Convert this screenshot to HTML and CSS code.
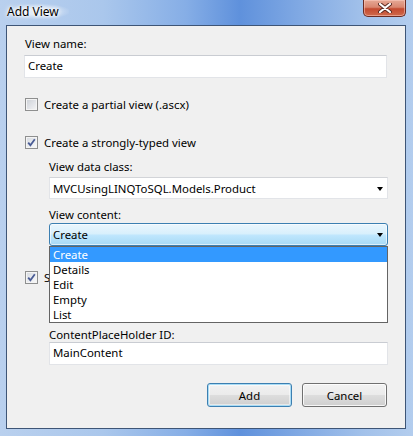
FILE: index.html
```html
<!DOCTYPE html>
<html>
<head>
<meta charset="utf-8">
<link rel="stylesheet" href="styles.css">
</head>
<body>
<div class="window">
  <div class="titlebar">
    <span class="title">Add View</span>
    <div class="close">
      <svg width="14" height="10" viewBox="0 0 14 10">
        <path d="M2 1 L12 9 M12 1 L2 9" stroke="#5a2a22" stroke-width="4" stroke-linecap="round"/>
        <path d="M2 1 L12 9 M12 1 L2 9" stroke="#ffffff" stroke-width="2.2" stroke-linecap="round"/>
      </svg>
    </div>
  </div>
  <div class="panel">
    <div class="label">View name:</div>
    <div class="textbox wide">Create</div>

    <div class="check-row first">
      <span class="checkbox"></span>
      <span>Create a partial view (.ascx)</span>
    </div>
    <div class="check-row second">
      <span class="checkbox checked">
        <svg width="9" height="9" viewBox="0 0 9 9"><path d="M1.2 4.6 L3.4 7.2 L7.8 1.2" fill="none" stroke="#4a5c95" stroke-width="1.8"/></svg>
      </span>
      <span>Create a strongly-typed view</span>
    </div>

    <div class="sub">
      <div class="label l-data">View data class:</div>
      <div class="select">
        <span>MVCUsingLINQToSQL.Models.Product</span>
        <span class="arrow"></span>
      </div>
      <div class="label l-content">View content:</div>
      <div class="combo-wrap">
        <div class="select focused">
          <span>Create</span>
          <span class="arrow"></span>
        </div>
        <ul class="dropdown">
          <li class="selected">Create</li>
          <li>Details</li>
          <li>Edit</li>
          <li>Empty</li>
          <li>List</li>
        </ul>
      </div>
    </div>

    <div class="check-row third">
      <span class="checkbox checked">
        <svg width="9" height="9" viewBox="0 0 9 9"><path d="M1.2 4.6 L3.4 7.2 L7.8 1.2" fill="none" stroke="#4a5c95" stroke-width="1.8"/></svg>
      </span>
      <span class="partial">S</span>
    </div>
    <div class="sub">
      <div class="label l-cph">ContentPlaceHolder ID:</div>
      <div class="textbox">MainContent</div>
    </div>

    <div class="buttons">
      <div class="btn default">Add</div>
      <div class="btn">Cancel</div>
    </div>
  </div>
</div>
</body>
</html>
```

FILE: styles.css
```css
* { box-sizing: border-box; }
html, body { margin: 0; padding: 0; }
body {
  font-family: "Noto Sans", "Open Sans", sans-serif;
  font-size: 11.4px;
  color: #000;
  background: #fff;
}
.window {
  width: 413px;
  height: 436px;
  background:
    linear-gradient(90deg, #b9d0ee 0%, #aac7ec 25%, #86aee6 45%, #5f91dc 58%, #7fa8e3 72%, #a2c1ea 88%, #b3cdee 100%);
  display: flex;
  flex-direction: column;
  overflow: hidden;
}
.titlebar {
  height: 25px;
  display: flex;
  justify-content: space-between;
  align-items: flex-start;
  padding-left: 7px;
  padding-right: 7px;
}
.title {
  margin-top: 4px;
  line-height: 15px;
  font-size: 12px;
  text-shadow: 0 0 6px #fff, 0 0 4px #fff, 0 0 2px #fff;
  background: radial-gradient(ellipse at center, rgba(255,255,255,0.55) 30%, rgba(255,255,255,0) 75%);
  padding: 0 10px 0 0;
}
.close {
  width: 43px;
  height: 17px;
  border: 1px solid #6a2b23;
  border-top: none;
  border-radius: 0 0 5px 5px;
  background: linear-gradient(180deg, #e6a996 0%, #d98670 45%, #c44a30 55%, #cf6a4c 100%);
  box-shadow: inset 0 0 0 1px rgba(255,210,200,0.5);
  display: flex;
  align-items: center;
  justify-content: center;
}
.panel {
  margin-left: 6px;
  width: 400px;
  height: 404px;
  border: 1px solid #3e5576;
  background: #f0f0f0;
  padding: 10px 17px 0 18px;
}
.label {
  line-height: 15px;
  height: 15px;
  white-space: nowrap;
}
.textbox {
  height: 23px;
  background: #fff;
  border: 1px solid #e2e4e8;
  border-top-color: #c9ccd2;
  padding-left: 3px;
  line-height: 20px;
  white-space: nowrap;
}
.textbox.wide {
  margin-top: 4px;
  margin-left: -1px;
  margin-right: 1px;
}
.check-row {
  display: flex;
  align-items: center;
  height: 15px;
  line-height: 15px;
  gap: 6px;
  white-space: nowrap;
}
.check-row.first { margin-top: 19px; }
.check-row.second { margin-top: 23px; }
.check-row.third { margin-top: 24px; }
.partial {
  width: 6px;
}
.checkbox {
  width: 13px;
  height: 13px;
  flex: none;
  border: 1px solid #8e8f8f;
  background: linear-gradient(135deg, #cbcfd5 0%, #e4e6ea 60%, #f6f6f6 100%);
  box-shadow: inset 0 0 0 1px #f4f4f4;
  display: flex;
  align-items: center;
  justify-content: center;
}
.checkbox.checked {
  background: linear-gradient(135deg, #d5d9df 0%, #eceef1 60%, #fafafa 100%);
}
.sub {
  margin-left: 24px;
}
.l-data { margin-top: 9px; }
.l-content { margin-top: 8px; }
.l-cph { margin-top: 42px; }
.select {
  margin-top: 3px;
  height: 22px;
  background: #fff;
  border: 1px solid #e2e4e8;
  border-top-color: #d2d4d8;
  display: flex;
  align-items: center;
  justify-content: space-between;
  padding: 0 4px 0 3px;
  white-space: nowrap;
}
.arrow {
  width: 0;
  height: 0;
  border-left: 3.5px solid transparent;
  border-right: 3.5px solid transparent;
  border-top: 4px solid #000;
  margin-top: 1px;
}
.combo-wrap {
  position: relative;
  margin-top: 1px;
}
.select.focused {
  margin-top: 0;
  height: 23px;
  border: 1px solid #3c7fb1;
  border-radius: 3px;
  background: linear-gradient(180deg, #eaf6fd 0%, #d9f0fc 45%, #bee6fd 55%, #a7d9f5 100%);
  box-shadow: inset 0 0 0 1px rgba(255,255,255,0.6);
}
.dropdown {
  position: absolute;
  left: 0;
  right: 0;
  top: 100%;
  margin: 0;
  padding: 0;
  list-style: none;
  background: #fff;
  border: 1px solid #646464;
  z-index: 5;
}
.dropdown li {
  height: 15px;
  line-height: 15px;
  padding-left: 3px;
}
.dropdown li.selected {
  background: #3399ff;
  color: #fff;
}
.btn {
  width: 85px;
  height: 24px;
  border: 1px solid #707070;
  border-radius: 3px;
  background: linear-gradient(180deg, #f2f2f2 0%, #ebebeb 48%, #dddddd 52%, #cfcfcf 100%);
  box-shadow: inset 0 0 0 1px rgba(255,255,255,0.8);
  display: flex;
  align-items: center;
  justify-content: center;
  line-height: 15px;
}
.btn.default {
  border-color: #3c7fb1;
  box-shadow: inset 0 0 0 1px #a9dcf5, inset 0 0 0 2px rgba(255,255,255,0.5);
}
.buttons {
  margin-top: 18px;
  display: flex;
  justify-content: flex-end;
  gap: 10px;
  padding-right: 1px;
}
```
